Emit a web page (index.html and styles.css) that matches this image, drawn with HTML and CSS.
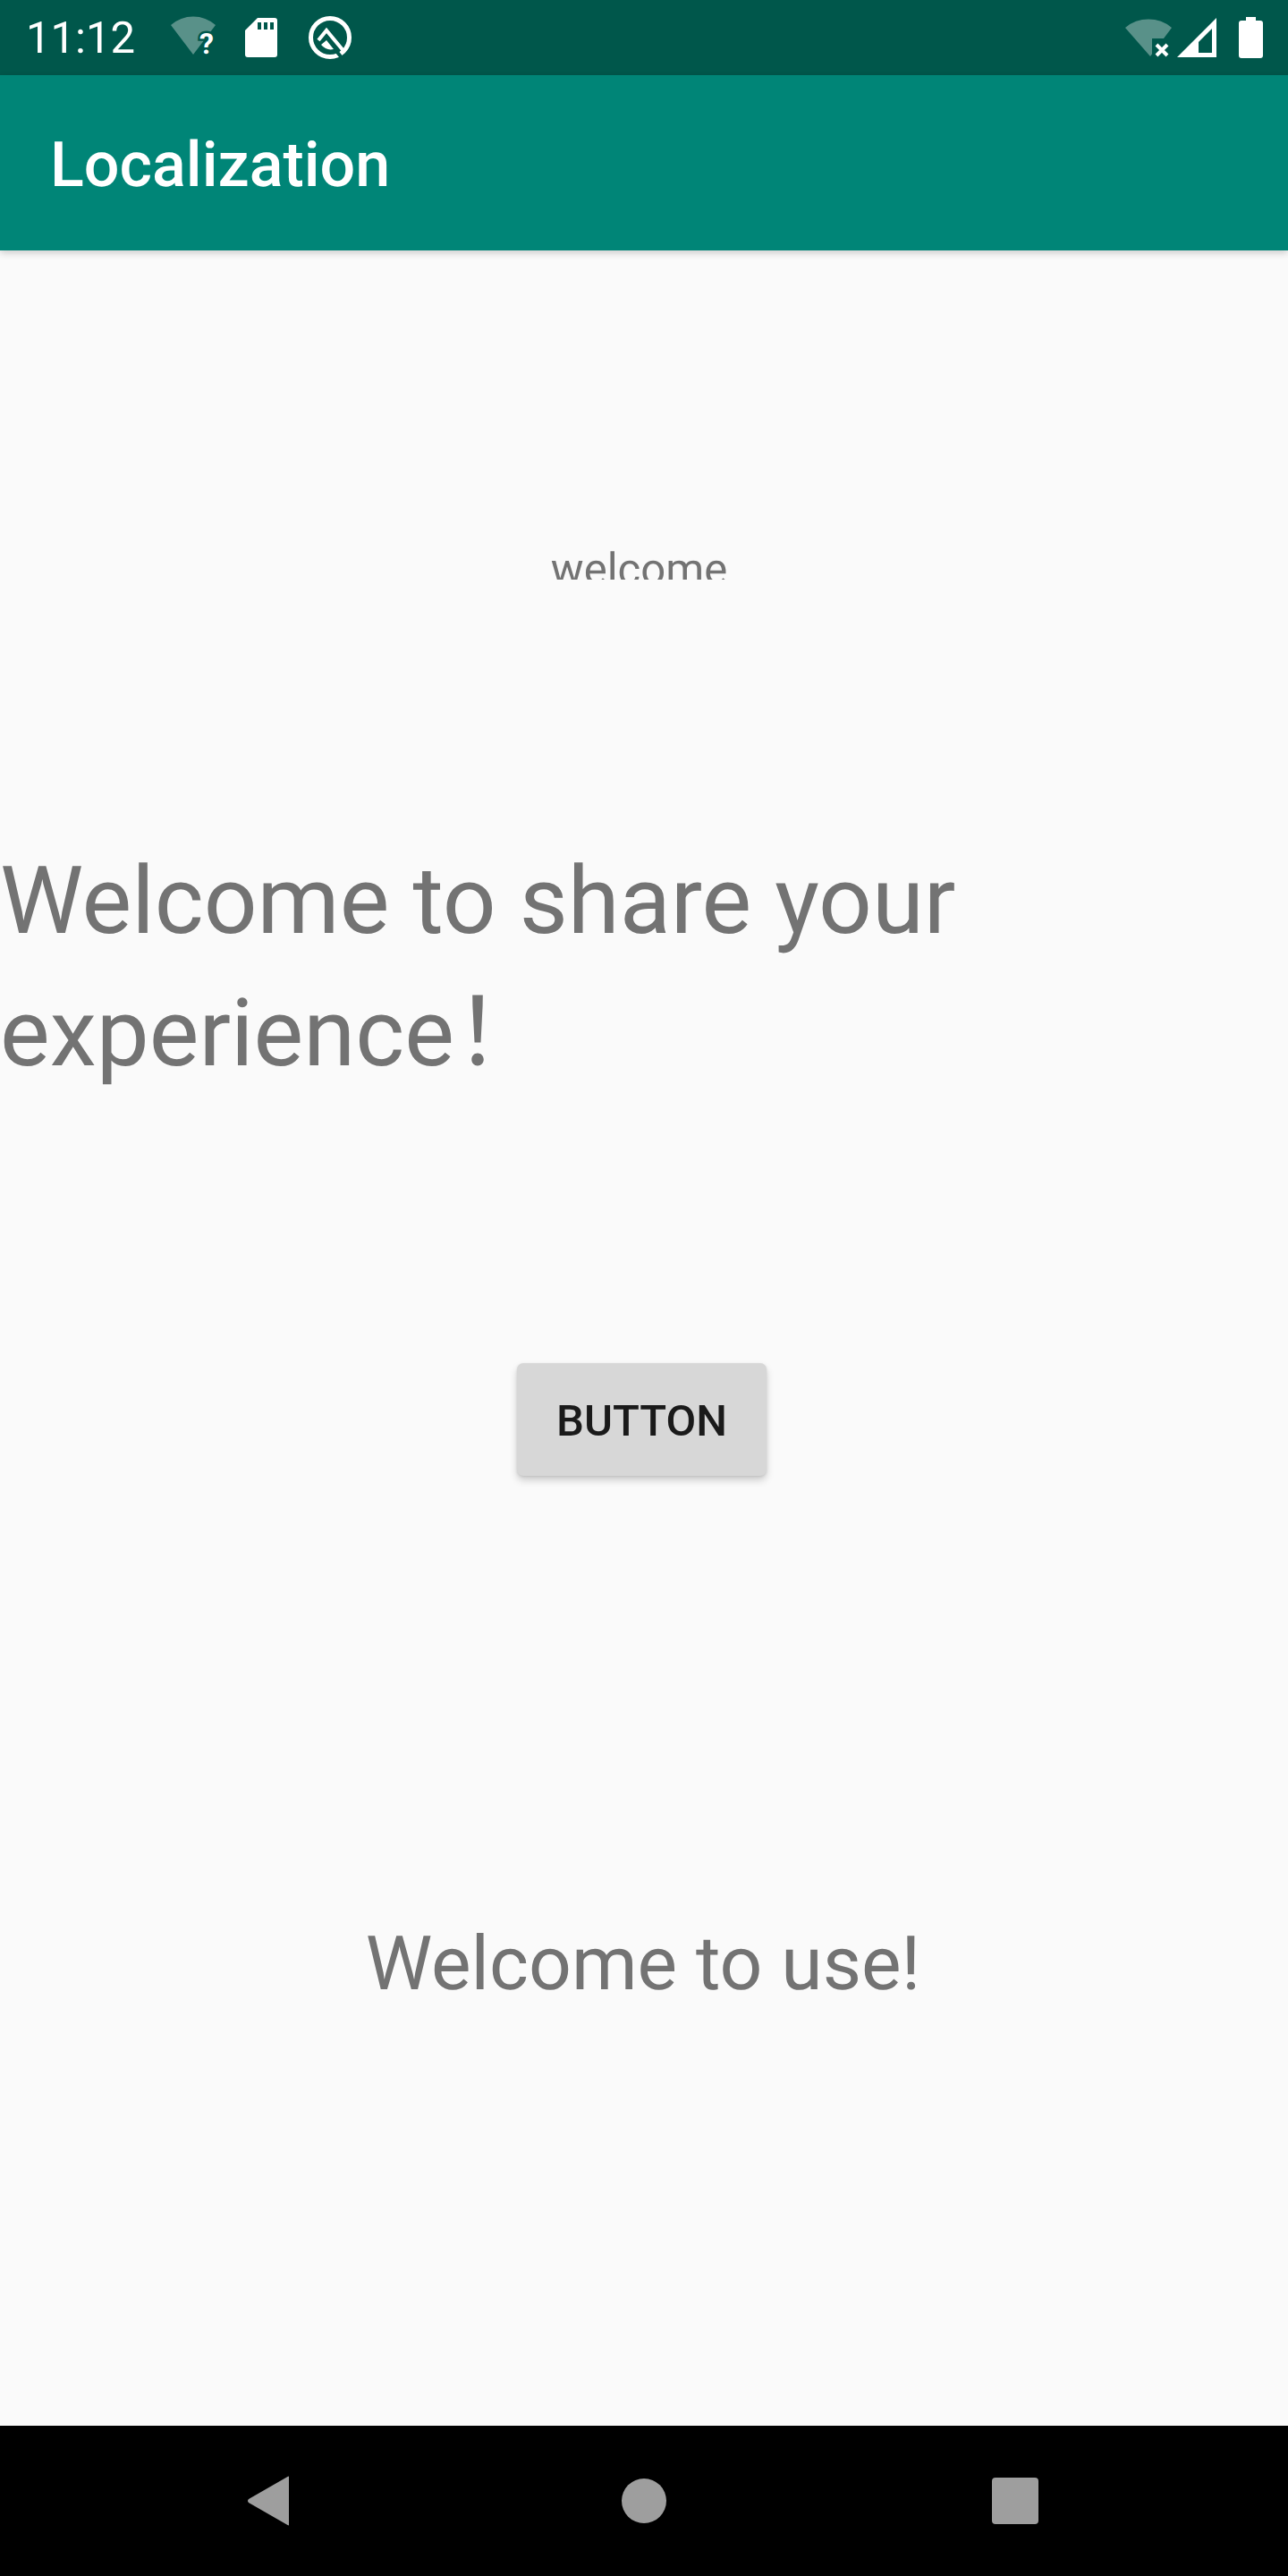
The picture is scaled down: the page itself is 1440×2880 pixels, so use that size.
FILE: index.html
```html
<!DOCTYPE html>
<html lang="en">
<head>
    <meta charset="UTF-8" />
    <meta name="viewport" content="width=device-width, initial-scale=1.0" />
    <title>Localization</title>
    <link rel="stylesheet" href="styles.css">
</head>
<body>
<div class="phone">
    <div class="status-bar">
        <span class="time">11:12</span>
        <svg class="icon icon-wifi-q" viewBox="0 0 52 42">
            <path d="M1 8 A38 38 0 0 1 51 8 L26 41 Z" fill="#fff" opacity="0.35"/>
            <text x="41" y="40" class="icon-text">?</text>
        </svg>
        <svg class="icon icon-sd" viewBox="0 0 36 44">
            <path d="M14 0 H33 A3 3 0 0 1 36 3 V41 A3 3 0 0 1 33 44 H3 A3 3 0 0 1 0 41 V14 Z" fill="#fff"/>
            <path d="M14 5 H18 V13 H14 Z M21 5 H25 V13 H21 Z M28 5 H32 V13 H28 Z" fill="#00574b"/>
        </svg>
        <svg class="icon icon-q" viewBox="0 0 50 50">
            <circle cx="25" cy="25" r="21.5" fill="none" stroke="#fff" stroke-width="5"/>
            <path d="M32 40 L40 50" stroke="#00574b" stroke-width="4"/>
            <path d="M12 28 L21 17 L41 41" fill="none" stroke="#fff" stroke-width="4"/>
            <path d="M15 33 L21 28 L29 38 Q21 40 15 33 Z" fill="#fff"/>
        </svg>
        <span class="spacer"></span>
        <svg class="icon icon-wifi-x" viewBox="0 0 52 44">
            <path d="M0 12 A40 40 0 0 1 52 12 L28 44 Z" fill="#fff" opacity="0.35"/>
            <path d="M30 24 H52 V44 H30 Z" fill="#00574b"/>
            <path d="M35 31 L47 43 M47 31 L35 43" stroke="#fff" stroke-width="4"/>
        </svg>
        <svg class="icon icon-signal" viewBox="0 0 44 44">
            <path d="M44 0 V44 H0 Z" fill="#fff"/>
            <path d="M39 12 V39 H24 V27 Z" fill="#00574b"/>
        </svg>
        <svg class="icon icon-battery" viewBox="0 0 27 46">
            <path d="M8 0 H19 V4 H24 A3 3 0 0 1 27 7 V43 A3 3 0 0 1 24 46 H3 A3 3 0 0 1 0 43 V7 A3 3 0 0 1 3 4 H8 Z" fill="#fff"/>
        </svg>
    </div>

    <div class="app-bar">Localization</div>

    <div class="content">
        <div class="small-row"><div class="small-label">welcome</div></div>
        <div class="big-text">Welcome to share your experience！</div>
        <div class="button-row"><button type="button">Button</button></div>
        <div class="use-text">Welcome to use!</div>
    </div>

    <div class="nav-bar">
        <svg class="nav-back" viewBox="0 0 48 56">
            <path d="M46 1.5 V54.5 Q46 56 44.5 55 L1 30 Q-1 28 1 26 L44.5 1 Q46 0 46 1.5 Z" fill="#9e9e9e"/>
        </svg>
        <span class="nav-home"></span>
        <span class="nav-recent"></span>
    </div>
</div>
</body>
</html>
```

FILE: styles.css
```css
body {
    margin: 0;
    background-color: #fafafa;
    font-family: Roboto, "Noto Sans CJK SC", sans-serif;
    text-rendering: geometricPrecision;
}
.phone {
    width: 1440px;
    height: 2880px;
    display: flex;
    flex-direction: column;
    overflow: hidden;
}
.status-bar {
    height: 84px;
    flex: none;
    background-color: #00574b;
    display: flex;
    align-items: center;
    padding: 0 28px 0 29px;
    color: white;
}
.time {
    font-size: 49px;
    width: 161px;
}
.icon {
    display: block;
    flex: none;
    overflow: visible;
}
.icon-wifi-q {
    width: 52px;
    height: 42px;
    margin-top: -2px;
}
.icon-text {
    fill: #fff;
    stroke: #00574b;
    stroke-width: 5px;
    paint-order: stroke;
    font-size: 32px;
    font-weight: 700;
    font-family: Roboto, sans-serif;
    text-anchor: middle;
}
.icon-sd {
    width: 36px;
    height: 44px;
    margin-left: 32px;
}
.icon-q {
    width: 50px;
    height: 50px;
    margin-left: 34px;
}
.spacer {
    flex: 1;
}
.icon-wifi-x {
    width: 52px;
    height: 44px;
    margin-top: -2px;
}
.icon-signal {
    width: 44px;
    height: 44px;
    margin-left: 6px;
}
.icon-battery {
    width: 27px;
    height: 46px;
    margin-left: 25px;
}
.app-bar {
    height: 196px;
    flex: none;
    box-sizing: border-box;
    background-color: #008577;
    color: white;
    font-size: 70px;
    font-weight: 500;
    line-height: 202px;
    padding-left: 56px;
    box-shadow: 0 3px 8px rgba(0, 0, 0, 0.18);
    position: relative;
}
.content {
    flex: 1;
    display: flex;
    flex-direction: column;
    color: #737373;
}
.small-row {
    display: flex;
    justify-content: center;
    padding-top: 328px;
    padding-right: 11px;
}
.small-label {
    font-size: 49px;
    line-height: 57px;
    height: 40px;
    overflow: hidden;
}
.big-text {
    font-size: 105px;
    line-height: 148px;
    width: 1200px;
    margin-top: 286px;
}
.button-row {
    display: flex;
    justify-content: center;
    padding-right: 5px;
    margin-top: 294px;
}
button {
    width: 279px;
    height: 126px;
    padding: 2px 0 0;
    background-color: #d7d7d7;
    color: #1a1a1a;
    border: none;
    border-radius: 7px;
    font-family: Roboto, sans-serif;
    font-size: 49px;
    font-weight: 500;
    text-transform: uppercase;
    box-shadow: 0 5px 9px rgba(0, 0, 0, 0.18), 0 1px 3px rgba(0, 0, 0, 0.1);
}
.use-text {
    font-size: 84px;
    line-height: 100px;
    text-align: center;
    padding-right: 2px;
    margin-top: 496px;
}
.nav-bar {
    height: 168px;
    flex: none;
    background-color: black;
    display: flex;
    align-items: center;
    padding-left: 277px;
}
.nav-back {
    width: 48px;
    height: 56px;
}
.nav-home {
    width: 50px;
    height: 50px;
    border-radius: 50%;
    background-color: #9e9e9e;
    margin-left: 370px;
}
.nav-recent {
    width: 52px;
    height: 52px;
    border-radius: 4px;
    background-color: #9e9e9e;
    margin-left: 364px;
}
```
